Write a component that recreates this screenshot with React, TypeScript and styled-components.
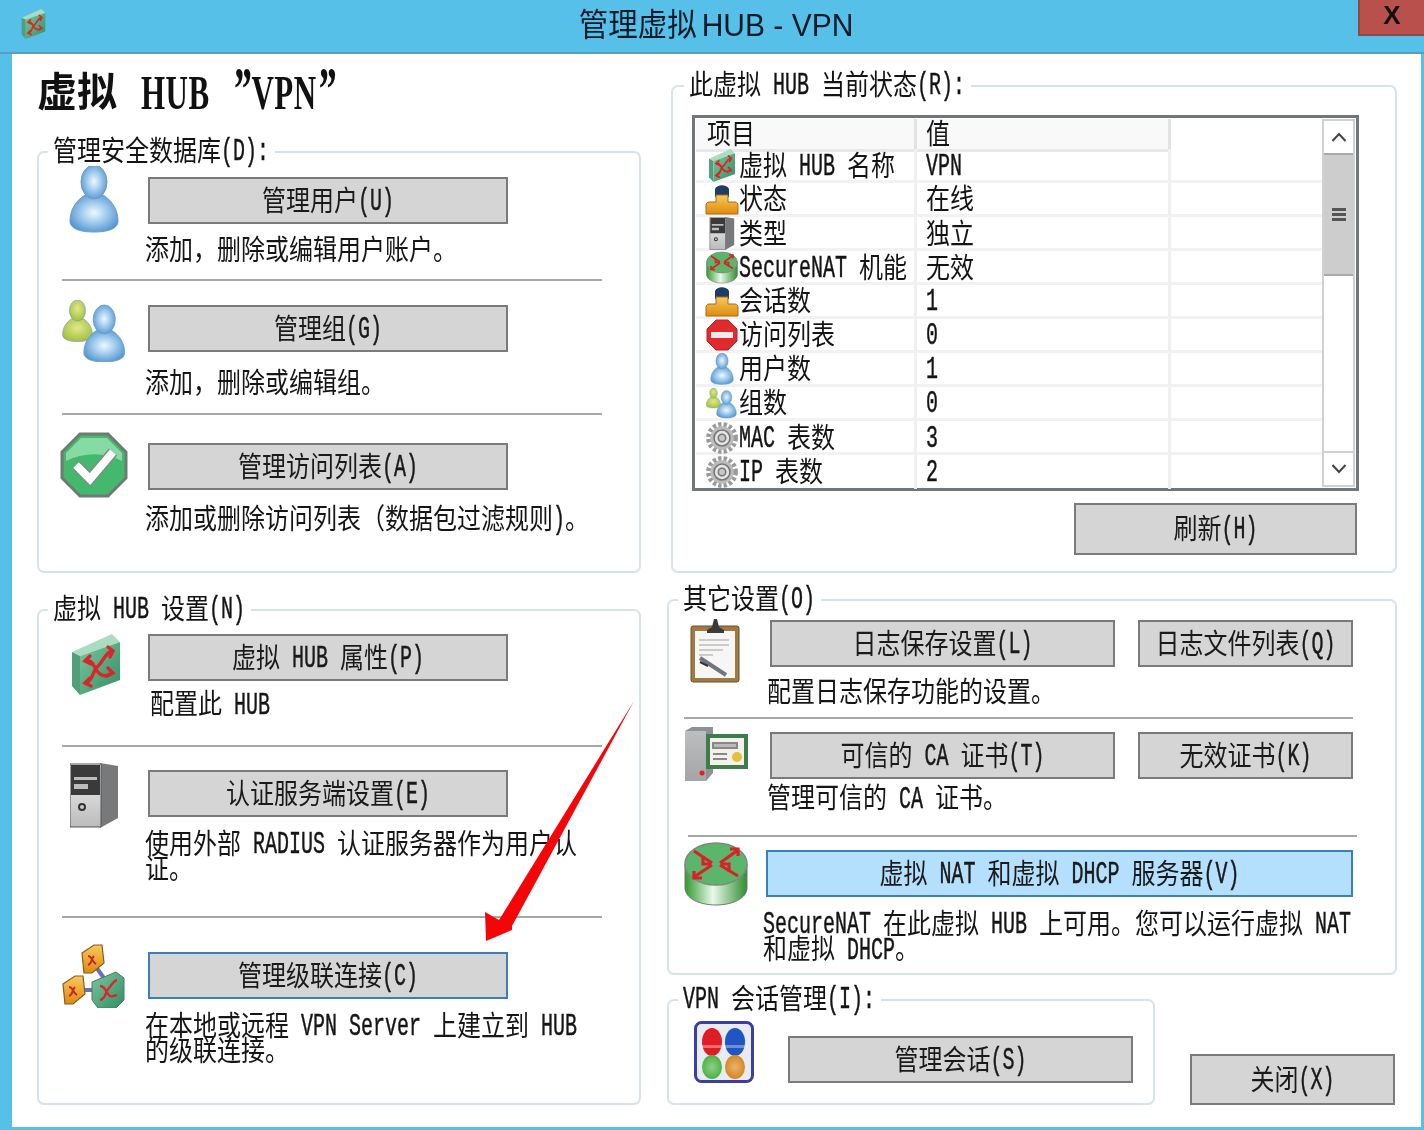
import React from "react";
import styled, { createGlobalStyle } from "styled-components";

const Global = createGlobalStyle`
  html, body { margin: 0; padding: 0; background: #56c0e8; }
  * { box-sizing: border-box; }
`;

const Window = styled.div`
  width: 1424px;
  height: 1130px;
  background: #56c0e8;
  overflow: hidden;
  display: flex;
  flex-direction: column;
  position: relative;
  filter: blur(0.45px);
  font-family: "Noto Sans CJK SC", "Liberation Sans", sans-serif;
  font-size: 24px;
  color: #141414;
`;
const TitleBar = styled.header`
  height: 54px;
  flex: none;
  display: flex;
  align-items: center;
  justify-content: center;
  position: relative;
  border-bottom: 2px solid #5a9dc0;
  color: #0c1a28;
`;
const TitleText = styled.h1`
  margin: 0 0 2px 8px;
  font-weight: 400;
  font-size: 29.5px;
  line-height: 1;
  white-space: pre;
  display: inline-block;
  transform: scaleY(1.06);
  b { font: 400 30px "Liberation Sans", sans-serif; margin-left: 5px; }
`;
const TitleIcon = styled.div`
  position: absolute;
  left: 20px;
  top: 9px;
`;
const CloseX = styled.button`
  position: absolute;
  right: 0;
  top: -2px;
  width: 66px;
  height: 38px;
  background: #b9504b;
  border: 2px solid #8a4a48;
  border-right: none;
  font: 700 26px "Liberation Sans", sans-serif;
  color: #111;
  padding: 0 0 4px;
`;
const Client = styled.main`
  flex: 1;
  margin: 0 3px 3px 12px;
  background: #fff;
  display: flex;
  padding-left: 25px;
`;
const LeftCol = styled.div`
  width: 604px;
  flex: none;
  display: flex;
  flex-direction: column;
`;
const RightCol = styled.div`
  width: 730px;
  flex: none;
  margin-left: 26px;
  padding-top: 31px;
  display: flex;
  flex-direction: column;
`;
const Heading = styled.h2`
  margin: 11px 0 38px;
  height: 48px;
  font-size: 40px;
  font-weight: 700;
  line-height: 48px;
  white-space: pre;
  color: #111;
`;
const HeadLatin = styled.span`
  display: inline-block;
  margin-left: 24px;
  font: 700 31px/48px "Liberation Serif", serif;
  word-spacing: 14px;
  letter-spacing: 0.5px;
  transform: scaleY(1.6);
  transform-origin: 50% 60%;
  em { font-style: italic; font-size: 38px; line-height: 0; }
`;
const Panel = styled.section<{ $h: number; $mt?: number; $ml?: number; $w?: string; $pl: number }>`
  position: relative;
  height: ${(p) => p.$h}px;
  width: ${(p) => p.$w ?? "auto"};
  margin-top: ${(p) => p.$mt ?? 0}px;
  margin-left: ${(p) => p.$ml ?? 0}px;
  padding-left: ${(p) => p.$pl}px;
  border: 2px solid #d8e2e9;
  border-radius: 7px;
  flex: none;
`;
const Legend = styled.div<{ $x: number }>`
  position: absolute;
  left: ${(p) => p.$x}px;
  top: -17px;
  height: 30px;
  line-height: 30px;
  background: #fff;
  padding: 0 6px 0 5px;
  white-space: pre;
`;
const Section = styled.div<{ $h: number; $pad: number; $col: number }>`
  display: grid;
  grid-template-columns: ${(p) => p.$col}px 1fr;
  align-content: start;
  height: ${(p) => p.$h}px;
  padding-top: ${(p) => p.$pad}px;
`;
const IconSlot = styled.div<{ $top: number; $left: number }>`
  grid-row: 1 / span 2;
  height: 0;
  margin-top: ${(p) => p.$top}px;
  margin-left: ${(p) => p.$left}px;
  svg { display: block; }
`;
const BtnRow = styled.div<{ $gap?: number }>`
  display: flex;
  gap: ${(p) => p.$gap ?? 0}px;
`;
const Btn = styled.button<{ $w: number; $h?: number; $tone?: "focus" | "primary" }>`
  width: ${(p) => p.$w}px;
  height: ${(p) => p.$h ?? 47}px;
  flex: none;
  padding: 0;
  display: flex;
  align-items: center;
  justify-content: center;
  white-space: pre;
  color: #1a1a1a;
  font: inherit;
  line-height: 24px;
  background: ${(p) => (p.$tone === "primary" ? "#b4e0fe" : "#d5d5d5")};
  border: 2px solid ${(p) => (p.$tone ? "#3b7fb8" : "#7b7b7b")};
`;
const Desc = styled.div<{ $mt: number; $x?: number; $w?: number }>`
  margin-top: ${(p) => p.$mt}px;
  margin-left: ${(p) => p.$x ?? -3}px;
  width: ${(p) => p.$w ?? 446}px;
  line-height: 21px;
  color: #161616;
`;
const Rule = styled.hr<{ $w: number; $shift?: number }>`
  margin: 0 0 0 ${(p) => p.$shift ?? 0}px;
  width: ${(p) => p.$w}px;
  height: 2px;
  border: none;
  background: #a6a6a6;
`;
const Stretch = styled.span`
  display: inline-block;
  vertical-align: top;
  transform: translateY(-2px) scaleY(1.2);
`;
const Latin = styled.span`
  display: inline-block;
  font: 400 20px/0 "Liberation Mono", monospace;
  -webkit-text-stroke: 0.3px #141414;
  transform: translateY(-2px) scaleY(1.3);
`;
const Gap = styled.span`
  font: 400 20px/0 "Liberation Mono", monospace;
  white-space: pre-wrap;
`;
const ListFrame = styled.div`
  width: 667px;
  height: 376px;
  border: 3px solid #6f777d;
  padding: 1px;
  display: flex;
  margin: 28px 0 0 19px;
`;
const ListBody = styled.div`
  flex: 1;
  display: flex;
  flex-direction: column;
`;
const ListRow = styled.div<{ $last?: boolean }>`
  height: 34px;
  flex: none;
  display: grid;
  grid-template-columns: 221px 254px 1fr;
  border-bottom: ${(p) => (p.$last ? "0" : "3px solid #f2f2f2")};
  white-space: pre;
  line-height: 30px;
`;
const NameCell = styled.div`
  display: flex;
  align-items: center;
  padding-left: 8px;
  border-right: 3px solid #f0f0f0;
`;
const RowIcon = styled.span`
  flex: none;
  width: 35px;
  display: flex;
  justify-content: center;
`;
const ValueCell = styled.div`
  display: flex;
  align-items: center;
  padding-left: 9px;
  border-right: 3px solid #f0f0f0;
`;
const HeaderRow = styled.div`
  height: 30px;
  flex: none;
  display: grid;
  grid-template-columns: 221px 254px 1fr;
  line-height: 30px;
`;
const HeaderCell = styled.div<{ $pl: number }>`
  background: #f9f9f9;
  border-right: 3px solid #e2e2e2;
  border-bottom: 3px solid #e8e8e8;
  padding-left: ${(p) => p.$pl}px;
  display: flex;
  align-items: center;
`;
const ScrollBar = styled.div`
  width: 33px;
  flex: none;
  display: flex;
  flex-direction: column;
  border: 2px solid #d0d0d0;
  background: #fff;
`;
const ScrollBtn = styled.div`
  height: 32px;
  flex: none;
  display: flex;
  align-items: center;
  justify-content: center;
  color: #555;
`;
const Thumb = styled.div`
  height: 123px;
  flex: none;
  background: #cdcdcd;
  border-top: 2px solid #aaa;
  border-bottom: 2px solid #aaa;
  display: flex;
  flex-direction: column;
  gap: 2px;
  align-items: center;
  justify-content: center;
  i { display: block; width: 14px; height: 3px; background: #555; }
`;
const Track = styled.div`
  flex: 1;
  border-bottom: 2px solid #d0d0d0;
`;
const RefreshRow = styled.div`
  display: flex;
  justify-content: flex-end;
  margin: 12px 38px 0 0;
`;
const BottomRow = styled.div`
  display: flex;
  align-items: flex-end;
  margin-top: 24px;
  gap: 35px;
`;
const Arrow = styled.svg`
  position: absolute;
  left: 0;
  top: 0;
  pointer-events: none;
`;

function T({ children }: { children: string }) {
  const parts = children.match(/ +|[\x21-\x7e]+|[^\x20-\x7e]+/g) ?? [];
  return (
    <Stretch>
      {parts.map((p, i) =>
        /^ +$/.test(p) ? <Gap key={i}>{p}</Gap> : /^[\x21-\x7e]/.test(p) ? <Latin key={i}>{p}</Latin> : <React.Fragment key={i}>{p}</React.Fragment>
      )}
    </Stretch>
  );
}

const Person = ({ x = 0, y = 0, s = 1, grad = "uBlue" }: { x?: number; y?: number; s?: number; grad?: string }) => (
  <g transform={`translate(${x} ${y}) scale(${s})`}>
    <path d="M16 30C6 36 1 46 1 56c0 7 8 11 24 11s24-4 24-11c0-10-5-20-15-26z" fill={`url(#${grad})`} stroke="#6b9cc8" strokeWidth="1" />
    <ellipse cx="25" cy="17" rx="13" ry="17" fill={`url(#${grad})`} stroke="#6b9cc8" strokeWidth="1" />
  </g>
);
const Defs = () => (
  <defs>
    <radialGradient id="uBlue" cx="50%" cy="48%" r="58%">
      <stop offset="0" stopColor="#eef8ff" />
      <stop offset=".45" stopColor="#a4cdee" />
      <stop offset="1" stopColor="#4f93cf" />
    </radialGradient>
    <radialGradient id="uGreen" cx="50%" cy="40%" r="60%">
      <stop offset="0" stopColor="#e0e98a" />
      <stop offset="1" stopColor="#a3c040" />
    </radialGradient>
    <linearGradient id="hubFace" x1="0" y1="0" x2="1" y2="1">
      <stop offset="0" stopColor="#7fc5a0" />
      <stop offset="1" stopColor="#2f8f62" />
    </linearGradient>
    <linearGradient id="orange" x1="0" y1="0" x2="0" y2="1">
      <stop offset="0" stopColor="#f7c95a" />
      <stop offset="1" stopColor="#e08a10" />
    </linearGradient>
    <linearGradient id="cyl" x1="0" y1="0" x2="1" y2="0">
      <stop offset="0" stopColor="#2f9a2f" />
      <stop offset=".45" stopColor="#eaf8ea" />
      <stop offset="1" stopColor="#2e8f2e" />
    </linearGradient>
    <linearGradient id="srv" x1="0" y1="0" x2="0" y2="1">
      <stop offset="0" stopColor="#f4f4f4" />
      <stop offset="1" stopColor="#bbb" />
    </linearGradient>
    <radialGradient id="gloss" cx="50%" cy="50%" r="55%">
      <stop offset="0" stopColor="#fff" stopOpacity=".35" />
      <stop offset="1" stopColor="#fff" stopOpacity="0" />
    </radialGradient>
  </defs>
);
const UserIcon = ({ w = 52, h = 68 }: { w?: number; h?: number }) => (
  <svg width={w} height={h} viewBox="0 0 50 68"><Defs /><Person /></svg>
);
const GroupIcon = ({ w = 66, h = 62 }: { w?: number; h?: number }) => (
  <svg width={w} height={h} viewBox="0 0 66 62">
    <Defs />
    <Person x={0} y={0} s={0.62} grad="uGreen" />
    <Person x={21} y={5} s={0.85} />
  </svg>
);
const CheckIcon = () => (
  <svg width="68" height="66" viewBox="0 0 68 66">
    <path d="M20 2h28l18 18v26L48 64H20L2 46V20z" fill="#44b86c" stroke="#6e7a72" strokeWidth="3" />
    <path d="M6 21L21 6h26l15 15v8C44 20 24 20 6 29z" fill="#86dba2" />
    <path d="M16 33l14 14 23-27" fill="none" stroke="#7e8f84" strokeWidth="11" />
    <path d="M16 33l14 14 23-27" fill="none" stroke="#fff" strokeWidth="8" />
  </svg>
);
const HubGlyph = () => (
  <g fill="none" stroke="#d9262a" strokeWidth="3.4" strokeLinecap="round">
    <path d="M14 49c8-3 6-12 12-17 5-4 7-13 14-15" />
    <path d="M14 27c8-2 8 9 14 13 5 3 7 2 12-1" />
    <path d="M36 13l5 4-3 6M36 34l5 5-6 3M18 44l-5 5 6 3M18 22l-5 5 6 3" />
  </g>
);
const HubIcon = ({ w = 48, h = 61 }: { w?: number; h?: number }) => (
  <svg width={w} height={h} viewBox="0 0 48 61">
    <Defs />
    <path d="M0 18L40 0l8 8-40 14z" fill="#a9dcc0" />
    <path d="M0 18l8 4v39l-8-9z" fill="#4f9f78" />
    <path d="M8 22L48 8v38L8 61z" fill="url(#hubFace)" />
    <HubGlyph />
  </svg>
);
const ServerIcon = ({ w = 48, h = 65 }: { w?: number; h?: number }) => (
  <svg width={w} height={h} viewBox="0 0 48 65">
    <Defs />
    <path d="M30 0l18 3v52l-18 10z" fill="#77797a" />
    <path d="M0 1h31v63H0z" fill="url(#srv)" stroke="#555" />
    <path d="M1 2h29v30H1z" fill="#3a3a3a" />
    <path d="M4 14h23v3H4zM4 21h14v5H4z" fill="#bdbdbd" />
    <circle cx="12" cy="44" r="3" fill="none" stroke="#333" strokeWidth="2" />
  </svg>
);
const OrangeBox = ({ x, y }: { x: number; y: number }) => (
  <g transform={`translate(${x} ${y})`}>
    <path d="M0 8L12 0h8l2 18-12 10H2z" fill="url(#orange)" stroke="#8b5a20" strokeWidth="1.2" />
    <path d="M6 20c4-1 3-6 6-9M6 11c4 0 4 6 8 8" fill="none" stroke="#c8282a" strokeWidth="2" />
  </g>
);
const CascadeIcon = () => (
  <svg width="64" height="64" viewBox="0 0 64 64">
    <Defs />
    <path d="M32 20l14 20M18 46h18" stroke="#6d6fb5" strokeWidth="4" />
    <OrangeBox x={20} y={1} />
    <OrangeBox x={1} y={32} />
    <path d="M30 38l24-10 8 6v22l-8 8H36l-6-8z" fill="url(#hubFace)" stroke="#4a7a60" />
    <path d="M38 56c6-1 5-8 9-12 3-3 4-7 8-8M38 42c6 0 6 8 10 10 2 1 4 0 7-1" fill="none" stroke="#d9262a" strokeWidth="2.4" />
  </svg>
);
const ClipIcon = () => (
  <svg width="50" height="66" viewBox="0 0 50 66">
    <rect x="1" y="8" width="48" height="56" rx="2" fill="#a07a45" stroke="#6d5028" />
    <rect x="5" y="13" width="40" height="47" fill="#f6f6f4" />
    <path d="M17 12l5-3 2-8h3l2 8 5 3v3H17z" fill="#3a3a3a" />
    <path d="M9 22h30M9 27h30M9 32h24M9 37h14" stroke="#bdbdbd" strokeWidth="1.6" />
    <path d="M10 40l26 17" stroke="#6f7680" strokeWidth="4" />
    <path d="M10 44l8 4" stroke="#333" strokeWidth="2" />
  </svg>
);
const CertIcon = () => (
  <svg width="64" height="56" viewBox="0 0 64 56">
    <Defs />
    <path d="M1 5l7-4h21v46l-7 8H1z" fill="#8f9294" />
    <path d="M1 5h21v50H1z" fill="url(#srv)" opacity=".45" />
    <circle cx="18" cy="47" r="2.5" fill="#e12020" />
    <rect x="22" y="8" width="42" height="35" fill="#3f7c4d" />
    <rect x="26" y="12" width="34" height="27" fill="#f2f2ea" />
    <path d="M29 17h24v5H29zM29 28h14M29 33h14" stroke="#888" strokeWidth="2" fill="#bbb" />
    <circle cx="53" cy="31" r="5" fill="#e5bf3e" />
  </svg>
);
const RouterIcon = ({ w = 64, h = 64 }: { w?: number; h?: number }) => (
  <svg width={w} height={h} viewBox="0 0 64 64">
    <Defs />
    <path d="M1 22v24c0 10 14 17 31 17s31-7 31-17V22z" fill="url(#cyl)" stroke="#777" />
    <ellipse cx="32" cy="22" rx="31" ry="21" fill="#5bb56b" stroke="#7c8a7f" strokeWidth="1.5" />
    <path d="M10 9l18 12M54 34L36 23M54 8L36 21M10 35l18-12" stroke="#d8222a" strokeWidth="3.2" />
    <path d="M46 7h8v7M18 36h-8v-7M19 14v8h8M45 30v-8h-8" fill="none" stroke="#d8222a" strokeWidth="3.2" />
  </svg>
);
const SessionIcon = () => (
  <svg width="60" height="62" viewBox="0 0 60 62">
    <Defs />
    <rect x="1.5" y="1.5" width="57" height="59" rx="6" fill="#e9ebf2" stroke="#3c3fa0" strokeWidth="3" />
    <ellipse cx="18" cy="21" rx="10" ry="14" fill="#e11d24" />
    <ellipse cx="41" cy="21" rx="10" ry="14" fill="#1f55c4" />
    <ellipse cx="18" cy="46" rx="10" ry="12" fill="#52b548" />
    <ellipse cx="41" cy="46" rx="10" ry="12" fill="#d98a26" />
    <rect x="6" y="24" width="48" height="3" fill="#fff" opacity=".35" />
    <ellipse cx="18" cy="46" rx="9" ry="10" fill="url(#gloss)" />
    <ellipse cx="41" cy="46" rx="9" ry="10" fill="url(#gloss)" />
  </svg>
);
const PipeIcon = () => (
  <svg width="34" height="32" viewBox="0 0 32 32">
    <Defs />
    <path d="M9 6c2-5 12-5 14 0v8H9z" fill="#1e3d66" />
    <path d="M10 12h12v7h7c2 0 3 2 3 3v9H0v-9c0-1 1-3 3-3h7z" fill="url(#orange)" stroke="#a86a10" />
  </svg>
);
const StopIcon = () => (
  <svg width="32" height="32" viewBox="0 0 32 32">
    <path d="M10 1h12l9 9v12l-9 9H10l-9-9V10z" fill="#e02b2e" stroke="#b92022" />
    <rect x="5" y="13" width="22" height="6" fill="#f6e9e9" />
  </svg>
);
const GearIcon = () => (
  <svg width="34" height="34" viewBox="0 0 32 32">
    <circle cx="16" cy="16" r="12.5" fill="none" stroke="#9a9a9a" strokeWidth="5" strokeDasharray="3 2" />
    <circle cx="16" cy="16" r="11" fill="#bcbcbc" />
    <circle cx="16" cy="16" r="7.5" fill="#e4e4e4" stroke="#777" strokeWidth="1.5" />
    <circle cx="16" cy="16" r="3.5" fill="#c8c8c8" stroke="#777" strokeWidth="1.5" />
  </svg>
);

const rows: [React.ReactNode, string, string][] = [
  [<HubIcon w={26} h={33} />, "虚拟 HUB 名称", "VPN"],
  [<PipeIcon />, "状态", "在线"],
  [<ServerIcon w={26} h={33} />, "类型", "独立"],
  [<RouterIcon w={32} h={33} />, "SecureNAT 机能", "无效"],
  [<PipeIcon />, "会话数", "1"],
  [<StopIcon />, "访问列表", "0"],
  [<UserIcon w={26} h={32} />, "用户数", "1"],
  [<GroupIcon w={32} h={32} />, "组数", "0"],
  [<GearIcon />, "MAC 表数", "3"],
  [<GearIcon />, "IP 表数", "2"],
];

export default function App() {
  return (
    <>
      <Global />
      <Window>
        <TitleBar>
          <TitleIcon><HubIcon w={27} h={30} /></TitleIcon>
          <TitleText>管理虚拟<b>HUB - VPN</b></TitleText>
          <CloseX>X</CloseX>
        </TitleBar>
        <Client>
          <LeftCol>
            <Heading>虚拟<HeadLatin>HUB <em>”</em>VPN<em>”</em></HeadLatin></Heading>
            <Panel $h={422} $pl={23}>
              <Legend $x={9}><T>管理安全数据库(D):</T></Legend>
              <Section $h={126} $pad={24} $col={86}>
                <IconSlot $top={-12} $left={6}><UserIcon /></IconSlot>
                <Btn $w={360}><T>管理用户(U)</T></Btn>
                <Desc $mt={15}><T>添加，删除或编辑用户账户。</T></Desc>
              </Section>
              <Rule $w={540} />
              <Section $h={132} $pad={24} $col={86}>
                <IconSlot $top={-5} $left={0}><GroupIcon /></IconSlot>
                <Btn $w={360}><T>管理组(G)</T></Btn>
                <Desc $mt={20}><T>添加，删除或编辑组。</T></Desc>
              </Section>
              <Rule $w={540} />
              <Section $h={150} $pad={28} $col={86}>
                <IconSlot $top={-11} $left={-2}><CheckIcon /></IconSlot>
                <Btn $w={360}><T>管理访问列表(A)</T></Btn>
                <Desc $mt={18}><T>添加或删除访问列表（数据包过滤规则)。</T></Desc>
              </Section>
            </Panel>
            <Panel $h={496} $mt={36} $pl={23}>
              <Legend $x={9}><T>虚拟 HUB 设置(N)</T></Legend>
              <Section $h={134} $pad={23} $col={86}>
                <IconSlot $top={0} $left={10}><HubIcon /></IconSlot>
                <Btn $w={360}><T>虚拟 HUB 属性(P)</T></Btn>
                <Desc $mt={12} $x={2}><T>配置此 HUB</T></Desc>
              </Section>
              <Rule $w={540} />
              <Section $h={169} $pad={23} $col={86}>
                <IconSlot $top={-7} $left={8}><ServerIcon /></IconSlot>
                <Btn $w={360}><T>认证服务端设置(E)</T></Btn>
                <Desc $mt={18}><T>使用外部 RADIUS 认证服务器作为用户认证。</T></Desc>
              </Section>
              <Rule $w={540} />
              <Section $h={160} $pad={34} $col={86}>
                <IconSlot $top={-8} $left={0}><CascadeIcon /></IconSlot>
                <Btn $w={360} $tone="focus"><T>管理级联连接(C)</T></Btn>
                <Desc $mt={18}><T>在本地或远程 VPN Server 上建立到 HUB 的级联连接。</T></Desc>
              </Section>
            </Panel>
          </LeftCol>
          <RightCol>
            <Panel $h={488} $ml={4} $pl={0}>
              <Legend $x={11}><T>此虚拟 HUB 当前状态(R):</T></Legend>
              <ListFrame>
                <ListBody>
                  <HeaderRow>
                    <HeaderCell $pl={11}><T>项目</T></HeaderCell>
                    <HeaderCell $pl={9}><T>值</T></HeaderCell>
                  </HeaderRow>
                  {rows.map(([icon, name, value], i) => (
                    <ListRow key={name} $last={i === rows.length - 1}>
                      <NameCell><RowIcon>{icon}</RowIcon><T>{name}</T></NameCell>
                      <ValueCell><T>{value}</T></ValueCell>
                    </ListRow>
                  ))}
                </ListBody>
                <ScrollBar>
                  <ScrollBtn>
                    <svg width="16" height="10" viewBox="0 0 16 10"><path d="M1.5 9L8 2l6.5 7" fill="none" stroke="#444" strokeWidth="2" /></svg>
                  </ScrollBtn>
                  <Thumb><i /><i /><i /></Thumb>
                  <Track />
                  <ScrollBtn>
                    <svg width="16" height="10" viewBox="0 0 16 10"><path d="M1.5 1L8 8l6.5-7" fill="none" stroke="#444" strokeWidth="2" /></svg>
                  </ScrollBtn>
                </ScrollBar>
              </ListFrame>
              <RefreshRow>
                <Btn $w={283} $h={52}><T>刷新(H)</T></Btn>
              </RefreshRow>
            </Panel>
            <Panel $h={376} $mt={26} $pl={15}>
              <Legend $x={9}><T>其它设置(O)</T></Legend>
              <Section $h={116} $pad={19} $col={86}>
                <IconSlot $top={-2} $left={6}><ClipIcon /></IconSlot>
                <BtnRow $gap={23}>
                  <Btn $w={345}><T>日志保存设置(L)</T></Btn>
                  <Btn $w={215}><T>日志文件列表(Q)</T></Btn>
                </BtnRow>
                <Desc $mt={14} $w={580}><T>配置日志保存功能的设置。</T></Desc>
              </Section>
              <Rule $w={669} />
              <Section $h={116} $pad={13} $col={86}>
                <IconSlot $top={-6} $left={0}><CertIcon /></IconSlot>
                <BtnRow $gap={23}>
                  <Btn $w={345}><T>可信的 CA 证书(T)</T></Btn>
                  <Btn $w={215}><T>无效证书(K)</T></Btn>
                </BtnRow>
                <Desc $mt={8} $w={580}><T>管理可信的 CA 证书。</T></Desc>
              </Section>
              <Rule $w={669} $shift={4} />
              <Section $h={136} $pad={13} $col={82}>
                <IconSlot $top={-8} $left={0}><RouterIcon /></IconSlot>
                <Btn $w={587} $tone="primary"><T>虚拟 NAT 和虚拟 DHCP 服务器(V)</T></Btn>
                <Desc $mt={18} $w={590}><T>SecureNAT 在此虚拟 HUB 上可用。您可以运行虚拟 NAT 和虚拟 DHCP。</T></Desc>
              </Section>
            </Panel>
            <BottomRow>
              <Panel $h={106} $w="488px" $pl={25}>
                <Legend $x={9}><T>VPN 会话管理(I):</T></Legend>
                <Section $h={100} $pad={35} $col={94}>
                  <IconSlot $top={-15} $left={0}><SessionIcon /></IconSlot>
                  <Btn $w={345}><T>管理会话(S)</T></Btn>
                </Section>
              </Panel>
              <Btn $w={205} $h={51}><T>关闭(X)</T></Btn>
            </BottomRow>
          </RightCol>
        </Client>
        <Arrow width="1424" height="1130" viewBox="0 0 1424 1130">
          <polygon points="634,701 512,926 512,930 486,941 485,912 499,920" fill="#f60508" />
        </Arrow>
      </Window>
    </>
  );
}
